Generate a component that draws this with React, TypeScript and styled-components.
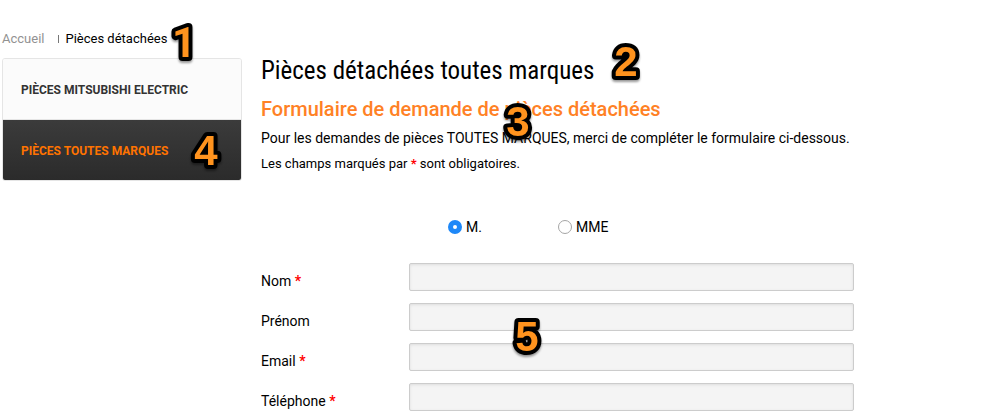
import React from "react";
import styled, { createGlobalStyle } from "styled-components";

const GlobalStyle = createGlobalStyle`
  * { box-sizing: border-box; }
  body {
    margin: 0;
    background: #fff;
    color: #000;
    font: 14px/20px Roboto, "Liberation Sans", sans-serif;
  }
`;

const Page = styled.div`
  padding: 29px 2px 0;
  overflow: hidden;
`;

const Breadcrumb = styled.nav`
  position: relative;
  display: flex;
  align-items: center;
  width: max-content;
  height: 20px;
  margin-bottom: 9px;
  font-size: 13px;
`;

const Crumb = styled.a<{ $current?: boolean }>`
  color: ${(p) => (p.$current ? "#000" : "#929292")};
  text-decoration: none;
`;

const Separator = styled.span`
  width: 1px;
  height: 8px;
  margin: 0 6px 0 14px;
  background: #777;
`;

const Columns = styled.div`
  display: flex;
  align-items: flex-start;
  gap: 19px;
`;

const Menu = styled.nav`
  flex: 0 0 240px;
  border: 1px solid #e5e5e5;
  border-radius: 3px;
  overflow: hidden;
`;

const MenuItem = styled.a<{ $active?: boolean }>`
  position: relative;
  display: flex;
  align-items: center;
  height: ${(p) => (p.$active ? "60px" : "61px")};
  padding: 2px 0 0 18px;
  border-bottom: ${(p) => (p.$active ? "0" : "1px solid #e5e5e5")};
  font-size: 12px;
  font-weight: 700;
  text-decoration: none;
  color: ${(p) => (p.$active ? "#ff7300" : "#333")};
  background: ${(p) => (p.$active ? "linear-gradient(#3b3b3b, #2b2b2b)" : "#fbfbfb")};
`;

const Content = styled.main`
  flex: 1;
  min-width: 0;
  max-width: 600px;
`;

const Title = styled.h1`
  position: relative;
  width: max-content;
  margin: -4px 0 8px;
  font: 400 25px/34px "Roboto Condensed", Roboto, sans-serif;
`;

const Subtitle = styled.h2`
  position: relative;
  width: max-content;
  margin: 0 0 6px;
  font-size: 20px;
  font-weight: 500;
  line-height: 26px;
  color: #ff8125;
`;

const Text = styled.p<{ $small?: boolean }>`
  margin: 0 0 6px;
  font-size: ${(p) => (p.$small ? "13px" : "14px")};
`;

const Star = styled.span`
  color: #f00;
  font-weight: 700;
`;

const Civility = styled.fieldset`
  display: flex;
  margin: 0 0 26px 187px;
  padding: 0;
  border: 0;
`;

const Choice = styled.label`
  display: flex;
  align-items: center;
  gap: 4px;
  width: 110px;
`;

const Radio = styled.input`
  appearance: none;
  width: 14px;
  height: 14px;
  margin: 0;
  border: 1px solid #a5a5a5;
  border-radius: 50%;
  background: #fff;
  &:checked {
    border: 5px solid #1e88f8;
  }
`;

const Form = styled.form`
  position: relative;
  margin-top: 43px;
`;

const Field = styled.div`
  display: flex;
  align-items: flex-start;
  height: 40px;
  padding-right: 7px;
`;

const Label = styled.label`
  flex: 0 0 148px;
  padding-top: 8px;
`;

const Input = styled.input`
  flex: 1;
  min-width: 0;
  height: 28px;
  padding: 0 8px;
  border: 1px solid #ccc;
  border-radius: 2px;
  background: #f4f4f4;
  box-shadow: inset 0 1px 3px #ddd;
  font: inherit;
`;

const MarkerBox = styled.svg<{ $left: number; $top: number }>`
  position: absolute;
  z-index: 1;
  left: ${(p) => p.$left}px;
  top: ${(p) => p.$top}px;
  width: 40px;
  height: 48px;
  filter: drop-shadow(0 2px 1px rgba(0, 0, 0, 0.4));
  pointer-events: none;
`;

const MarkerDigit = styled.text<{ $plain?: boolean }>`
  fill: #ff931e;
  stroke: #000;
  stroke-width: 8px;
  stroke-linejoin: round;
  paint-order: stroke;
  font: 700 42px ${(p) => (p.$plain ? "Roboto" : '"Liberation Sans"')}, Arial, sans-serif;
  text-anchor: middle;
`;

function Marker({ left, top, plain, children }: {
  left: number;
  top: number;
  plain?: boolean;
  children: string;
}) {
  return (
    <MarkerBox $left={left} $top={top} viewBox="0 0 40 48">
      <MarkerDigit x="20" y="38" $plain={plain}>{children}</MarkerDigit>
    </MarkerBox>
  );
}

const fields = [
  { id: "nom", label: "Nom", type: "text", required: true },
  { id: "prenom", label: "Prénom", type: "text", required: false },
  { id: "email", label: "Email", type: "email", required: true },
  { id: "telephone", label: "Téléphone", type: "tel", required: true },
];

export default function App() {
  return (
    <>
      <GlobalStyle />
      <Page>
        <Breadcrumb aria-label="Fil d'Ariane">
          <Crumb href="#accueil">Accueil</Crumb>
          <Separator />
          <Crumb href="#pieces" $current>Pièces détachées</Crumb>
          <Marker left={162} top={-10} plain>1</Marker>
        </Breadcrumb>
        <Columns>
          <Menu>
            <MenuItem href="#mitsubishi">PIÈCES MITSUBISHI ELECTRIC</MenuItem>
            <MenuItem href="#toutes" $active>
              PIÈCES TOUTES MARQUES
              <Marker left={183} top={7}>4</Marker>
            </MenuItem>
          </Menu>
          <Content>
            <Title>
              Pièces détachées toutes marques
              <Marker left={345} top={-16}>2</Marker>
            </Title>
            <Subtitle>
              Formulaire de demande de pièces détachées
              <Marker left={237} top={2}>3</Marker>
            </Subtitle>
            <Text>
              Pour les demandes de pièces TOUTES MARQUES, merci de compléter le
              formulaire ci-dessous.
            </Text>
            <Text $small>
              Les champs marqués par <Star>*</Star> sont obligatoires.
            </Text>
            <Form>
              <Civility aria-label="Civilité">
                <Choice>
                  <Radio type="radio" name="civilite" defaultChecked />
                  M.
                </Choice>
                <Choice>
                  <Radio type="radio" name="civilite" />
                  MME
                </Choice>
              </Civility>
              {fields.map((f) => (
                <Field key={f.id}>
                  <Label htmlFor={f.id}>
                    {f.label} {f.required && <Star>*</Star>}
                  </Label>
                  <Input id={f.id} type={f.type} required={f.required} />
                </Field>
              ))}
              <Marker left={246} top={96}>5</Marker>
            </Form>
          </Content>
        </Columns>
      </Page>
    </>
  );
}
